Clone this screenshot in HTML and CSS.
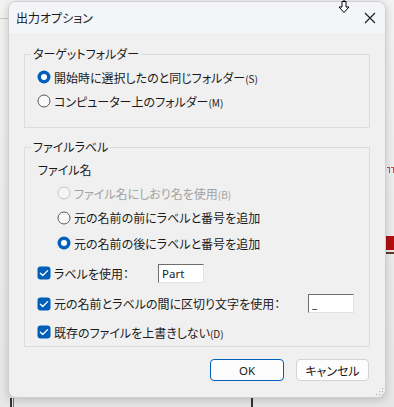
FILE: index.html
```html
<!DOCTYPE html>
<html lang="ja">
<head>
<meta charset="utf-8">
<title>出力オプション</title>
<link rel="stylesheet" href="styles.css">
</head>
<body>
<div class="desk">
  <div class="bg-line"></div>
  <div class="bg-red-mark"></div>
  <div class="bg-red-mark m2"></div>
  <div class="bg-red-bar"></div>
  <div class="bg-dark-bar"></div>
  <div class="bg-tick t1"></div>
  <div class="bg-tick t2"></div>
  <div class="bg-tick t3"></div>

  <div class="dialog">
    <div class="titlebar">
      <span class="title">出力オプション</span>
      <svg class="close" width="12" height="12" viewBox="0 0 12 12"><path d="M1 1 L11 11 M11 1 L1 11" stroke="#1a1a1a" stroke-width="1.1" fill="none"/></svg>
    </div>
    <div class="content">
      <div class="group g1">
        <div class="legend">ターゲットフォルダー</div>
        <div class="row r24 ind1">
          <svg class="ctl" width="14" height="14" viewBox="0 0 14 14"><circle cx="7" cy="7" r="6.5" fill="#005fb8"/><circle cx="7" cy="7" r="3" fill="#fff"/></svg>
          <span>開始時に選択したのと同じフォルダー<span class="acc">(S)</span></span>
        </div>
        <div class="row r24 ind1">
          <svg class="ctl" width="14" height="14" viewBox="0 0 14 14"><circle cx="7" cy="7" r="6" fill="#f9f9f9" stroke="#5a5a5a" stroke-width="1"/></svg>
          <span>コンピューター上のフォルダー<span class="acc">(M)</span></span>
        </div>
      </div>

      <div class="group g2">
        <div class="legend">ファイルラベル</div>
        <div class="row sub">ファイル名</div>
        <div class="row r24 ind2 disabled">
          <svg class="ctl" width="14" height="14" viewBox="0 0 14 14"><circle cx="7" cy="7" r="6" fill="#f4f4f4" stroke="#c6c6c6" stroke-width="1"/></svg>
          <span>ファイル名にしおり名を使用<span class="acc">(B)</span></span>
        </div>
        <div class="row r25 ind2">
          <svg class="ctl" width="14" height="14" viewBox="0 0 14 14"><circle cx="7" cy="7" r="6" fill="#f9f9f9" stroke="#5a5a5a" stroke-width="1"/></svg>
          <span>元の名前の前にラベルと番号を追加</span>
        </div>
        <div class="row r26 ind2">
          <svg class="ctl" width="14" height="14" viewBox="0 0 14 14"><circle cx="7" cy="7" r="6.5" fill="#005fb8"/><circle cx="7" cy="7" r="3" fill="#fff"/></svg>
          <span>元の名前の後にラベルと番号を追加</span>
        </div>
        <div class="row c1 ind1">
          <svg class="ctl" width="14" height="14" viewBox="0 0 14 14"><rect x="0.5" y="0.5" width="13" height="13" rx="3" fill="#005fb8"/><path d="M3.4 7.2 L5.8 9.5 L10.6 4.6" stroke="#fff" stroke-width="1.3" fill="none" stroke-linecap="round" stroke-linejoin="round"/></svg>
          <span class="lbl1">ラベルを使用：</span>
          <span class="field f1">Part</span>
        </div>
        <div class="row c2 ind1">
          <svg class="ctl" width="14" height="14" viewBox="0 0 14 14"><rect x="0.5" y="0.5" width="13" height="13" rx="3" fill="#005fb8"/><path d="M3.4 7.2 L5.8 9.5 L10.6 4.6" stroke="#fff" stroke-width="1.3" fill="none" stroke-linecap="round" stroke-linejoin="round"/></svg>
          <span class="lbl2">元の名前とラベルの間に区切り文字を使用：</span>
          <span class="field f2">_</span>
        </div>
        <div class="row c3 ind1">
          <svg class="ctl" width="14" height="14" viewBox="0 0 14 14"><rect x="0.5" y="0.5" width="13" height="13" rx="3" fill="#005fb8"/><path d="M3.4 7.2 L5.8 9.5 L10.6 4.6" stroke="#fff" stroke-width="1.3" fill="none" stroke-linecap="round" stroke-linejoin="round"/></svg>
          <span>既存のファイルを上書きしない<span class="acc">(D)</span></span>
        </div>
      </div>

      <div class="buttons">
        <div class="btn ok">OK</div>
        <div class="btn cancel">キャンセル</div>
      </div>
    </div>
    <svg class="grip" width="9" height="9" viewBox="0 0 9 9"><g fill="#b0b0b0"><rect x="7" y="1" width="1.2" height="1.2"/><rect x="4" y="4" width="1.2" height="1.2"/><rect x="7" y="4" width="1.2" height="1.2"/><rect x="1" y="7" width="1.2" height="1.2"/><rect x="4" y="7" width="1.2" height="1.2"/><rect x="7" y="7" width="1.2" height="1.2"/></g></svg>
  </div>

  <svg class="cursor" width="14" height="16" viewBox="0 0 14 16"><path d="M7 0 L7 2 M5 2.5 L9 2.5 L9 8 L12 8 L7 13.5 L2 8 L5 8 Z" stroke="#000" stroke-width="1" fill="#fff" stroke-linejoin="miter"/></svg>
</div>
</body>
</html>
```

FILE: styles.css
```css
* { box-sizing: border-box; }
html, body { margin: 0; padding: 0; }
body {
  width: 394px;
  height: 407px;
  overflow: hidden;
  background: #e9e9e9;
  font-family: "Noto Sans CJK JP", "Noto Sans", sans-serif;
  font-size: 12px;
  color: #1a1a1a;
}
.desk {
  position: relative;
  width: 394px;
  height: 407px;
  padding: 1px 0 0 8px;
  background: linear-gradient(#f2f2f2, #e6e6e6);
}
.bg-line { position: absolute; left: 0; top: 18px; width: 8px; height: 1px; background: #c9c9c9; }
.bg-red-mark { position: absolute; left: 387px; top: 167px; width: 3px; height: 6px; border-top: 1px solid #d04848; border-right: 1px solid #d04848; }
.bg-red-mark.m2 { left: 391px; width: 3px; }
.bg-red-bar { position: absolute; left: 386px; top: 236px; width: 8px; height: 14px; background: #b01010; }
.bg-dark-bar { position: absolute; left: 386px; top: 252px; width: 8px; height: 2px; background: #5a3a2a; }
.bg-tick { position: absolute; top: 398px; height: 9px; width: 2px; background: #333; }
.t1 { left: 10px; }
.t2 { left: 13px; width: 1px; background: #777; }
.t3 { left: 251px; }

.dialog {
  position: relative;
  width: 378px;
  height: 397px;
  background: #f0f0f0;
  border: 1px solid #cfcfcf;
  border-radius: 8px;
  box-shadow: 0 2px 8px rgba(0,0,0,0.18);
  overflow: hidden;
  display: flex;
  flex-direction: column;
}
.titlebar {
  height: 31px;
  flex: none;
  display: flex;
  align-items: center;
  justify-content: space-between;
  padding: 0 9px 0 7px;
  background: #f3f5f8;
}
.title { font-size: 12px; line-height: 16px; font-feature-settings: "palt"; }
.close { display: block; }
.content {
  padding: 21px 15px 0 15px;
  flex: 1;
  display: flex;
  flex-direction: column;
}
.group {
  border: 1px solid #dcdcdc;
  display: flex;
  flex-direction: column;
}
.legend {
  align-self: flex-start;
  margin: -9px 0 0 6px;
  padding: 0 2px;
  height: 16px;
  line-height: 16px;
  background: #f0f0f0;
  font-feature-settings: "palt";
}
.g1 { padding-bottom: 14px; }
.g1 .legend { margin-bottom: 3px; }
.g2 { margin-top: 19px; padding-bottom: 1px; }
.g2 .legend { margin-bottom: 2px; }
.row {
  display: flex;
  align-items: center;
  font-feature-settings: "palt";
  white-space: nowrap;
}
.ctl { flex: none; margin-right: 3px; }
.ind1 { padding-left: 12px; }
.ind2 { padding-left: 32px; }
.r24 { height: 24px; }
.r25 { height: 25px; }
.r26 { height: 26px; }
.sub { height: 24px; padding-left: 13px; }
.c1 { height: 30px; margin-top: 2px; }
.c2 { height: 31px; }
.c3 { height: 26px; }
.disabled { color: #a2a2a2; }
.acc { font-size: 10px; }
.lbl1 { width: 104px; }
.lbl2 { width: 254px; }
.field {
  display: flex;
  align-items: center;
  height: 19px;
  width: 46px;
  background: #fff;
  border: 1px solid #e2e2e2;
  border-top-color: #6d6d6d;
  border-left-color: #6d6d6d;
  padding-left: 3px;
  font-family: "Noto Sans", sans-serif;
  font-size: 11.5px;
}
.buttons {
  display: flex;
  justify-content: flex-end;
  gap: 12px;
  margin-top: 12px;
  padding-right: 1px;
}
.btn {
  height: 22px;
  display: flex;
  align-items: center;
  justify-content: center;
  background: #fdfdfd;
  border: 1px solid #d3d3d3;
  border-radius: 4px;
  font-feature-settings: "palt";
}
.ok { width: 74px; border-color: #005fb8; font-family: "Noto Sans", sans-serif; font-size: 11.5px; }
.cancel { width: 73px; }
.grip { position: absolute; right: 1px; bottom: 1px; }
.cursor { position: absolute; left: 337px; top: -1px; }
```
